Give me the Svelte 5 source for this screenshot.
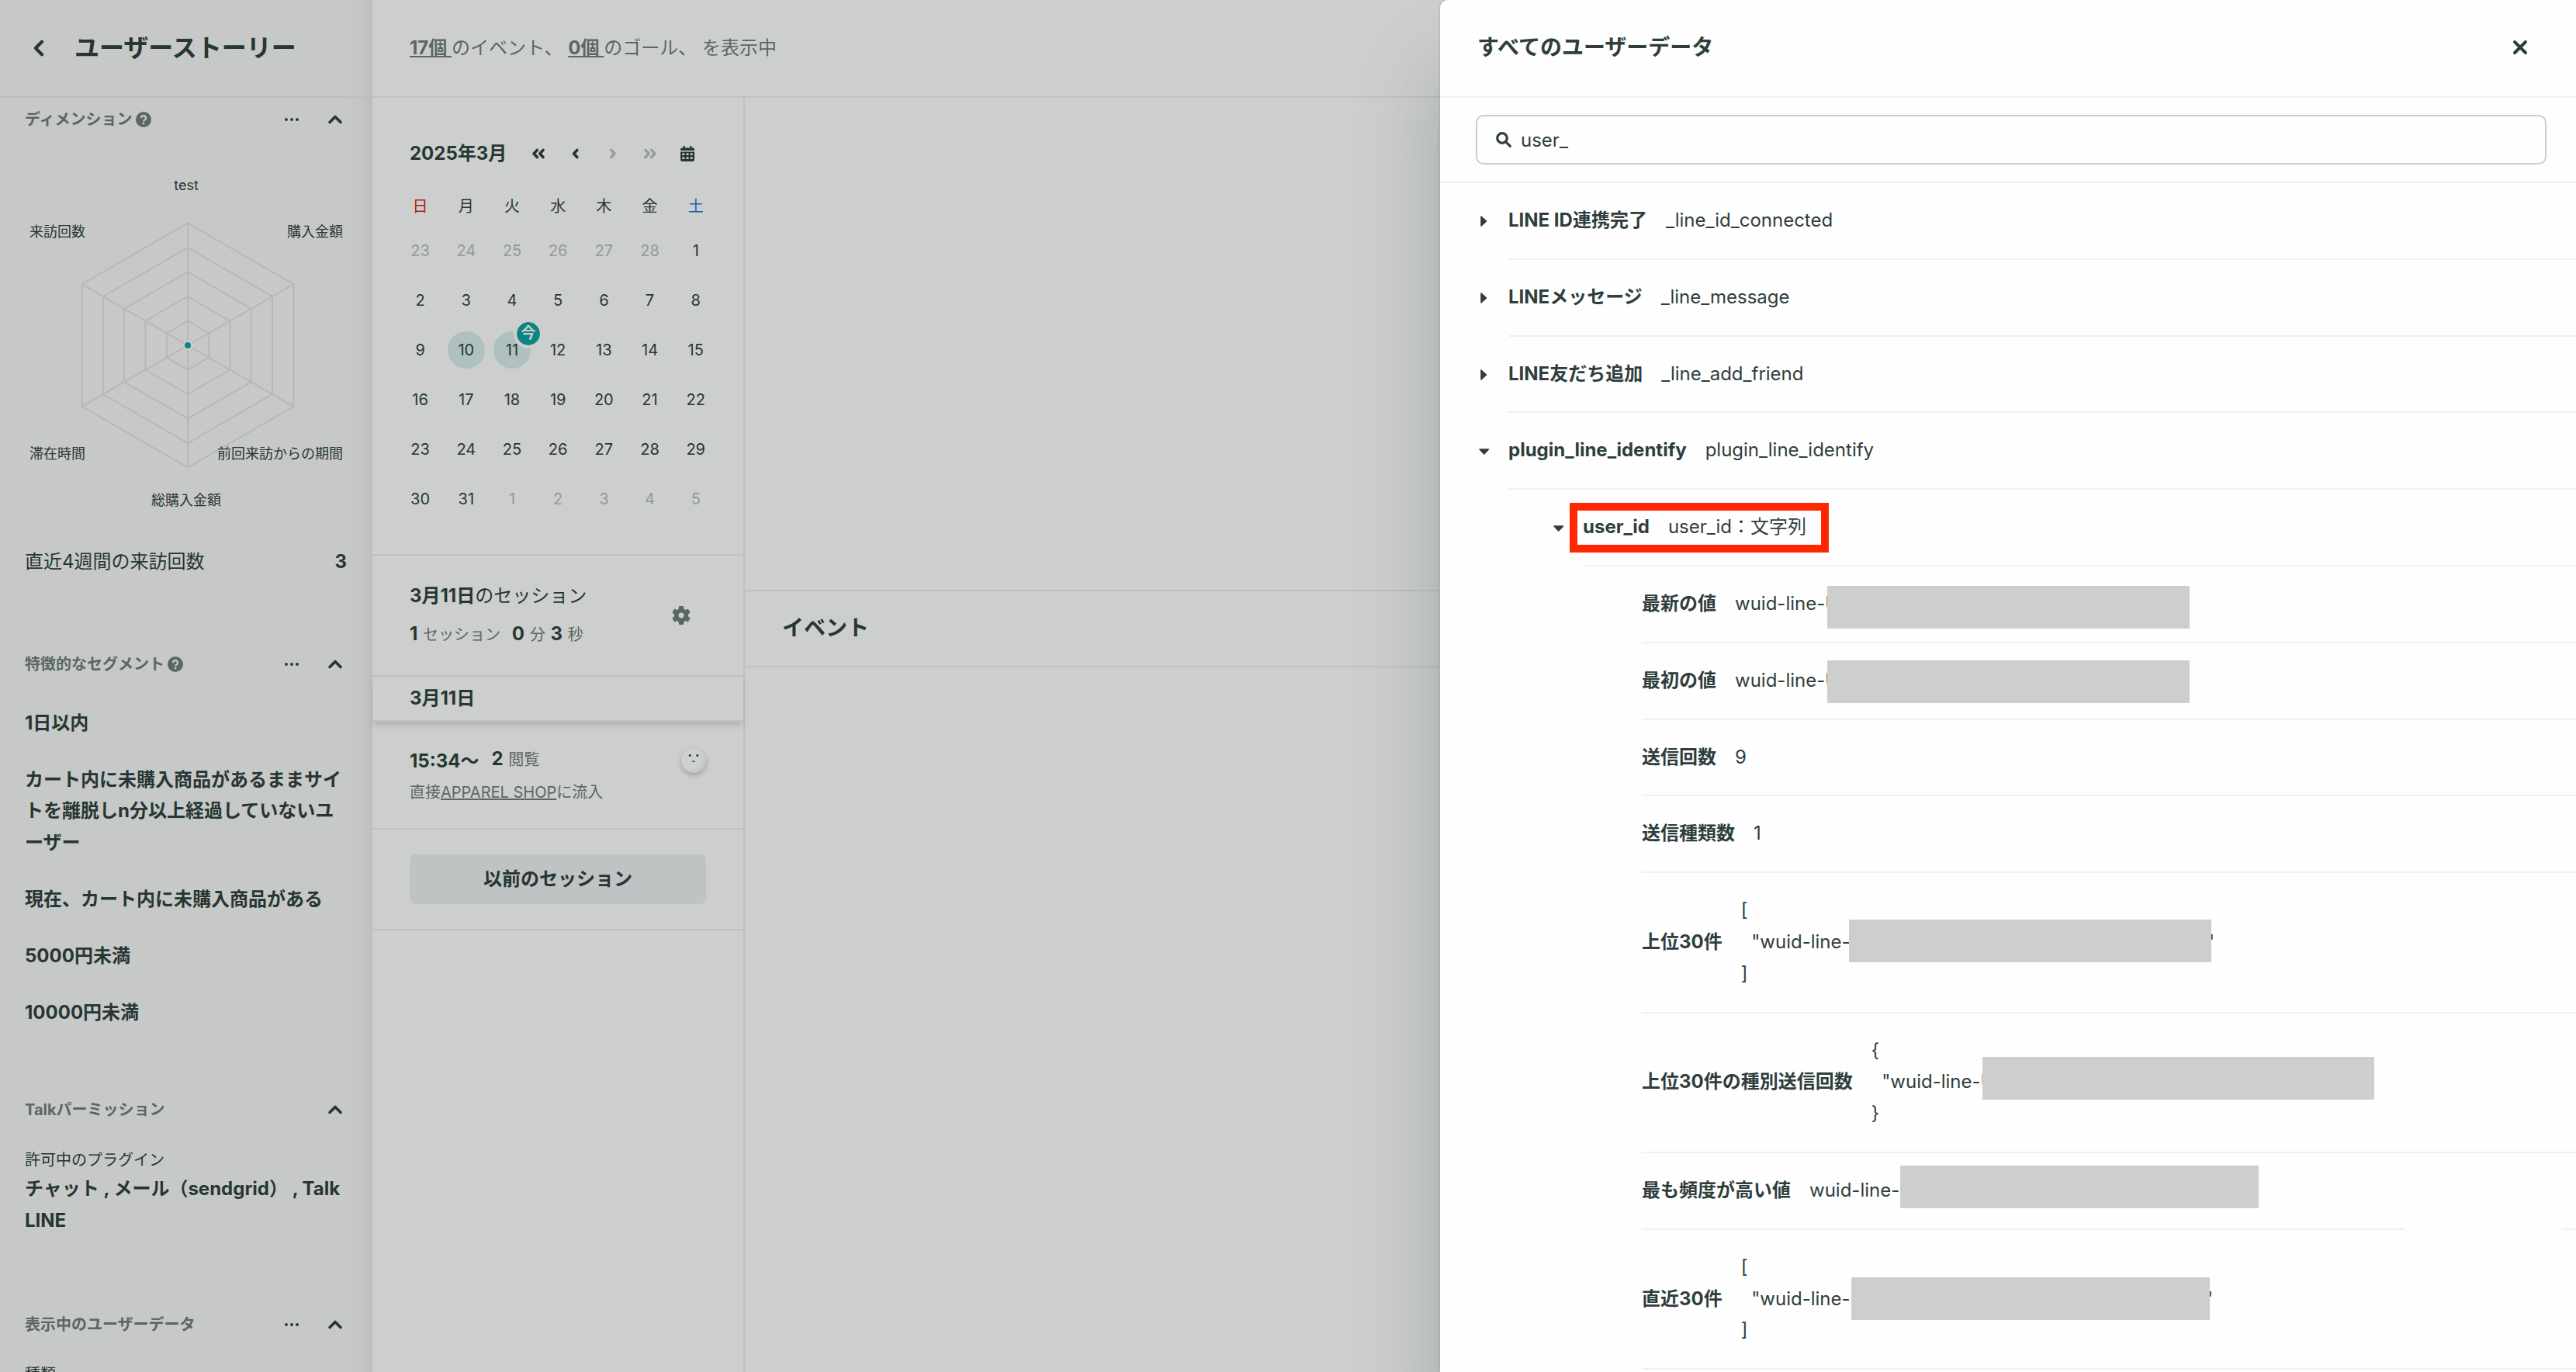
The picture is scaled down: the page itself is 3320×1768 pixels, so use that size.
<script lang="ts">
	type Row = {
		level: number;
		label: string;
		value: string;
		state?: 'open' | 'closed';
		block?: boolean;
		mask?: [left: number, top: number, width: number];
		quote?: boolean;
		marked?: boolean;
		cut?: boolean;
	};

	const week = ['日', '月', '火', '水', '木', '金', '土'];

	// Feb 23 to Apr 5
	const days = Array.from({ length: 42 }, (_, i) => {
		if (i < 6) return { n: 23 + i, out: true };
		if (i < 37) return { n: i - 5, out: false };
		return { n: i - 36, out: true };
	});

	const segments = [
		'1日以内',
		'カート内に未購入商品があるままサイトを離脱しn分以上経過していないユーザー',
		'現在、カート内に未購入商品がある',
		'5000円未満',
		'10000円未満'
	];

	const axes = [
		{ text: 'test', x: 240, y: 65, anchor: 'middle' },
		{ text: '購入金額', x: 442, y: 125, anchor: 'end' },
		{ text: '前回来訪からの期間', x: 442, y: 411, anchor: 'end' },
		{ text: '総購入金額', x: 240, y: 471, anchor: 'middle' },
		{ text: '滞在時間', x: 38, y: 411, anchor: 'start' },
		{ text: '来訪回数', x: 38, y: 125, anchor: 'start' }
	] as const;

	const rows: Row[] = [
		{ level: 1, label: 'LINE ID連携完了', value: '_line_id_connected', state: 'closed' },
		{ level: 1, label: 'LINEメッセージ', value: '_line_message', state: 'closed' },
		{ level: 1, label: 'LINE友だち追加', value: '_line_add_friend', state: 'closed' },
		{ level: 1, label: 'plugin_line_identify', value: 'plugin_line_identify', state: 'open' },
		{ level: 2, label: 'user_id', value: 'user_id：文字列', state: 'open', marked: true },
		{ level: 3, label: '最新の値', value: 'wuid-line-U', mask: [239, 25, 467] },
		{ level: 3, label: '最初の値', value: 'wuid-line-U', mask: [239, 22, 467] },
		{ level: 3, label: '送信回数', value: '9' },
		{ level: 3, label: '送信種類数', value: '1' },
		{ level: 3, label: '上位30件', value: '[\n  "wuid-line-\n]', block: true, mask: [267, 60, 467], quote: true },
		{ level: 3, label: '上位30件の種別送信回数', value: '{\n  "wuid-line-U\n}', block: true, mask: [439, 56, 505] },
		{ level: 3, label: '最も頻度が高い値', value: 'wuid-line-', mask: [333, 16, 462], cut: true },
		{ level: 3, label: '直近30件', value: '[\n  "wuid-line-\n]', block: true, mask: [270, 61, 462], quote: true }
	];

	function hexagon(r: number) {
		return [0, 1, 2, 3, 4, 5]
			.map((i) => {
				const a = (Math.PI / 3) * i;
				return `${242 + r * Math.sin(a)},${265 - r * Math.cos(a)}`;
			})
			.join(' ');
	}
</script>

{#snippet chevron(cls: string, d: string)}
	<svg class="icon {cls}" viewBox="0 0 24 24"><path {d} /></svg>
{/snippet}

{#snippet section(title: string, help: boolean, more: boolean)}
	<div class="section-head">
		<span class="section-title">{title}</span>
		{#if help}
			<svg class="help" viewBox="0 0 20 20">
				<circle cx="10" cy="10" r="10" />
				<path d="M7 8a3 3 0 1 1 4.6 2.5c-1 .6-1.6 1-1.6 1.8" />
				<circle class="dot" cx="10" cy="15" r="1.4" />
			</svg>
		{/if}
		<span class="grow"></span>
		{#if more}
			<svg class="more" viewBox="0 0 18 4">
				<circle cx="2" cy="2" r="1.9" /><circle cx="9" cy="2" r="1.9" /><circle cx="16" cy="2" r="1.9" />
			</svg>
		{/if}
		{@render chevron('up', 'M5 15.5 12 8.5l7 7')}
	</div>
{/snippet}

<div class="app">
	<aside class="sidebar">
		<header class="side-top">
			{@render chevron('back', 'M15.5 5 8.5 12l7 7')}
			<h1>ユーザーストーリー</h1>
		</header>

		<section class="dimension">
			{@render section('ディメンション', true, true)}
			<svg class="radar" viewBox="0 0 480 500">
				{#each [1, 2, 3, 4, 5] as ring}
					<polygon points={hexagon(ring * 31.5)} />
				{/each}
				{#each [0, 1, 2, 3, 4, 5] as i}
					<line
						x1="242"
						y1="265"
						x2={242 + 157.5 * Math.sin((Math.PI / 3) * i)}
						y2={265 - 157.5 * Math.cos((Math.PI / 3) * i)}
					/>
				{/each}
				<circle cx="242" cy="265" r="5" />
				{#each axes as a}
					<text x={a.x} y={a.y} text-anchor={a.anchor}>{a.text}</text>
				{/each}
			</svg>
			<div class="visits"><span>直近4週間の来訪回数</span><b>3</b></div>
		</section>

		<section class="segments">
			{@render section('特徴的なセグメント', true, true)}
			<ul>
				{#each segments as s}
					<li>{s}</li>
				{/each}
			</ul>
		</section>

		<section class="talk">
			{@render section('Talkパーミッション', false, false)}
			<p class="small">許可中のプラグイン</p>
			<p class="plugins">チャット , メール（sendgrid） , Talk LINE</p>
		</section>

		<section class="shown">
			{@render section('表示中のユーザーデータ', false, true)}
			<p class="small">種類</p>
		</section>
	</aside>

	<main>
		<header class="summary">
			<p><u>{'17個 '}</u>のイベント、 <u>{'0個 '}</u>のゴール、 を表示中</p>
		</header>

		<div class="columns">
			<div class="sessions">
				<section class="calendar">
					<div class="cal-nav">
						<b>2025年3月</b>
						<div class="cal-icons">
							{@render chevron('nav', 'M10.3 7.4 6 12l4.3 4.6M18 7.4 13.7 12l4.3 4.6')}
							{@render chevron('nav', 'M13.8 7.4 9.5 12l4.3 4.6')}
							{@render chevron('nav off', 'M9.8 7.4 14.1 12l-4.3 4.6')}
							{@render chevron('nav off', 'M6 7.4 10.3 12 6 16.6M13.7 7.4 18 12l-4.3 4.6')}
							<svg class="cal-icon" viewBox="0 0 18 20">
								<path
									fill-rule="evenodd"
									d="M3.5 1a1.2 1.2 0 0 1 2.4 0v1.5h6.2V1a1.2 1.2 0 0 1 2.4 0v1.5H16a2 2 0 0 1 2 2V6H0V4.5a2 2 0 0 1 2-2h1.5zM0 7.5h18V18a2 2 0 0 1-2 2H2a2 2 0 0 1-2-2zM2.3 9.5V12h3V9.5zm5.2 0V12h3V9.5zm5.2 0V12h3V9.5zM2.3 14.5V17h3v-2.5zm5.2 0V17h3v-2.5zm5.2 0V17h3v-2.5z"
								/>
							</svg>
						</div>
					</div>
					<div class="grid">
						{#each week as w, i}
							<span class="wd" class:sun={i === 0} class:sat={i === 6}>{w}</span>
						{/each}
						{#each days as d}
							<span class="day" class:out={d.out} class:active={!d.out && (d.n === 10 || d.n === 11)}>
								{d.n}
								{#if !d.out && d.n === 11}<i class="now">今</i>{/if}
							</span>
						{/each}
					</div>
				</section>

				<section class="day-total">
					<div>
						<p class="when"><b>3月11日</b>のセッション</p>
						<p class="stats"><b>1</b> <small>セッション</small> <b class="time">0</b> <small>分</small> <b>3</b> <small>秒</small></p>
					</div>
					<svg class="gear" viewBox="0 0 24 24">
						<circle cx="12" cy="12" r="6.2" />
						{#each [0, 60, 120, 180, 240, 300] as deg}
							<path d="M9.8.8h4.4l.8 4H9z" transform="rotate({deg} 12 12)" />
						{/each}
					</svg>
				</section>

				<div class="date-bar">3月11日</div>

				<section class="session">
					<div>
						<p class="start"><b>15:34〜</b><span><b>2</b> <small>閲覧</small></span></p>
						<p class="source">直接<u>APPAREL SHOP</u>に流入</p>
					</div>
					<div class="face">
						<svg viewBox="0 0 32 32">
							<circle cx="11.2" cy="9.5" r="1.5" /><circle cx="20.8" cy="9.5" r="1.5" />
							<path d="M14 17.2h4" />
						</svg>
					</div>
				</section>

				<div class="older"><button>以前のセッション</button></div>
			</div>

			<div class="events">
				<div class="map"></div>
				<h2>イベント</h2>
			</div>
		</div>
	</main>

	<div class="drawer">
		<header>
			<h2>すべてのユーザーデータ</h2>
			{@render chevron('close', 'M5 5l14 14M19 5 5 19')}
		</header>
		<div class="search">
			<div class="field">
				<svg viewBox="0 0 20 20"><circle cx="8" cy="8" r="6.3" /><path d="M12.8 12.8 18.3 18.3" /></svg>
				<span>user_</span>
			</div>
		</div>
		<div class="rows">
			{#each rows as row}
				<div class="row l{row.level}" class:cut={row.cut}>
					{#if row.state}
						<svg class="caret" viewBox="0 0 16 16">
							{#if row.state === 'open'}
								<path d="M3 6h11.5l-5.750 6z" />
							{:else}
								<path d="M5 2v12l6.5-6z" />
							{/if}
						</svg>
					{/if}
					<b>{row.label}</b>
					<span class="value" class:block={row.block}>{row.value}</span>
					{#if row.marked}<i class="mark"></i>{/if}
					{#if row.mask}
						{#if row.quote}
							<span class="quote" style="left: {row.mask[0] + row.mask[2] - 7}px">"</span>
						{/if}
						<i class="mask" style="left: {row.mask[0]}px; top: {row.mask[1]}px; width: {row.mask[2]}px"></i>
					{/if}
				</div>
			{/each}
		</div>
	</div>
</div>

<style>
	:global(body) {
		overflow: hidden;
	}

	.app {
		position: relative;
		display: flex;
		width: 3320px;
		height: 1768px;
		overflow: hidden;
		background: #cdcfce;
		color: #263632;
		font-family: Inter, 'Noto Sans CJK JP', sans-serif;
		font-size: 24px;
		line-height: 1.7;
	}

	h1,
	h2,
	p,
	ul {
		margin: 0;
		padding: 0;
		list-style: none;
	}

	i {
		font-style: normal;
	}

	b {
		font-weight: 700;
	}

	small {
		font-size: 20px;
		color: #5b6764;
	}

	.icon {
		fill: none;
		stroke: currentColor;
		stroke-width: 3.6;
		stroke-linecap: round;
		stroke-linejoin: round;
		flex: none;
	}

	.grow {
		flex: 1;
	}

	/* sidebar */
	.sidebar {
		width: 480px;
		flex: none;
		background: linear-gradient(to left, #bdbfbe, #c3c5c4 14px, #c7c9c8 34px);
	}

	.side-top {
		display: flex;
		align-items: center;
		height: 124px;
		border-bottom: 2px solid #bdbfbe;
	}

	.side-top h1 {
		font-size: 32px;
		font-weight: 700;
		line-height: 1;
		margin-bottom: 1px;
	}

	.back {
		width: 28px;
		height: 28px;
		margin: 0 32px 0 36px;
	}

	.section-head {
		display: flex;
		align-items: center;
		height: 34px;
		padding: 0 38px 0 32px;
	}

	.section-title {
		font-size: 20px;
		font-weight: 700;
		color: #5b6764;
	}

	.help {
		width: 20px;
		height: 20px;
		margin-left: 4px;
		fill: #5b6764;
	}

	.help path {
		fill: none;
		stroke: #c7c9c8;
		stroke-width: 2.4;
	}

	.help .dot {
		fill: #c7c9c8;
	}

	.more {
		width: 18px;
		height: 4px;
		margin-right: 35px;
		fill: #263632;
	}

	.up {
		width: 24px;
		height: 24px;
		margin-right: -2px;
	}

	.dimension {
		padding-top: 11px;
	}

	.radar {
		display: block;
		width: 480px;
		height: 500px;
		margin-top: 9px;
		font-size: 18px;
	}

	.radar polygon,
	.radar line {
		fill: none;
		stroke: #b5b7b6;
		stroke-width: 1.8;
	}

	.radar circle {
		fill: #0d8583;
		stroke: #cdcfce;
		stroke-width: 2;
	}

	.radar text {
		fill: #263632;
	}

	.visits {
		display: flex;
		justify-content: space-between;
		padding: 24px 33px 0 32px;
	}

	.segments {
		padding-top: 94px;
	}

	.segments ul {
		display: flex;
		flex-direction: column;
		gap: 32px;
		padding: 39px 32px 0;
		font-weight: 700;
	}

	.talk {
		padding-top: 88px;
	}

	.small {
		font-size: 20px;
		padding: 0 32px;
	}

	.talk .small {
		padding-top: 31px;
	}

	.plugins {
		padding: 0 30px 0 32px;
		font-weight: 700;
	}

	.shown {
		padding-top: 96px;
	}

	.shown .small {
		padding-top: 30px;
	}

	/* main */
	main {
		flex: 1;
		display: flex;
		flex-direction: column;
	}

	.summary {
		display: flex;
		align-items: center;
		height: 124px;
		padding-left: 48px;
		border-bottom: 2px solid #c0c2c1;
		color: #5b6764;
	}

	.summary p {
		white-space: pre;
	}

	.summary u {
		font-weight: 700;
	}

	.columns {
		flex: 1;
		display: flex;
	}

	.sessions {
		width: 478px;
		flex: none;
		border-right: 2px solid #c0c2c1;
	}

	.calendar {
		height: 590px;
		box-sizing: border-box;
		padding: 51px 32px 0 32px;
		border-bottom: 2px solid #c0c2c1;
	}

	.cal-nav {
		display: flex;
		align-items: center;
		height: 42px;
		padding-left: 16px;
	}

	.cal-nav b {
		width: 123px;
		white-space: nowrap;
	}

	.cal-icons {
		display: flex;
		align-items: center;
		margin-left: 31px;
	}

	.nav {
		width: 24px;
		height: 24px;
		margin-right: 24px;
	}

	.off {
		color: #9a9f9d;
	}

	.cal-icon {
		width: 18px;
		height: 20px;
		fill: #263632;
		margin-left: 3px;
	}

	.grid {
		display: grid;
		grid-template-columns: repeat(7, 59.2px);
		grid-template-rows: 50px repeat(6, 64px);
		margin-top: 22px;
		font-size: 20px;
		justify-items: center;
		align-items: center;
	}

	.sun {
		color: #b0201c;
	}

	.sat {
		color: #1b61a8;
	}

	.day {
		position: relative;
		width: 48px;
		height: 48px;
		line-height: 48px;
		text-align: center;
		border-radius: 50%;
	}

	.out {
		color: #93999a;
	}

	.active {
		background: #aec1be;
	}

	.now {
		position: absolute;
		right: -16px;
		top: -16px;
		width: 30px;
		height: 30px;
		border: 4px solid #cdcfce;
		border-radius: 50%;
		background: #0d8583;
		background-clip: padding-box;
		color: #cdcfce;
		font-size: 19px;
		font-weight: 700;
		line-height: 29px;
	}

	.day-total {
		display: flex;
		justify-content: space-between;
		align-items: center;
		height: 156px;
		box-sizing: border-box;
		padding: 0 68px 0 48px;
		border-bottom: 2px solid #c0c2c1;
	}

	.stats {
		margin-top: 8px;
	}

	.stats .time {
		margin-left: 8px;
	}

	.gear {
		width: 24px;
		height: 24px;
		fill: #5b6764;
	}

	.gear circle {
		fill: none;
		stroke: #5b6764;
		stroke-width: 5.6;
	}

	.gear path {
		stroke: #5b6764;
		stroke-width: 1.4;
		stroke-linejoin: round;
	}

	.date-bar {
		height: 56px;
		padding-left: 48px;
		border-bottom: 2px solid #c0c2c1;
		box-shadow: 0 5px 8px -1px rgba(0, 0, 0, 0.16);
		font-weight: 700;
		line-height: 56px;
	}

	.session {
		display: flex;
		justify-content: space-between;
		height: 139px;
		box-sizing: border-box;
		padding: 28px 48px 0 48px;
		border-bottom: 2px solid #c0c2c1;
	}

	.start {
		display: flex;
		gap: 16px;
		height: 46px;
	}

	.start b {
		padding-top: 3px;
	}

	.start span b {
		padding: 0;
	}

	.source {
		font-size: 20px;
		color: #5b6764;
	}

	.face {
		width: 32px;
		height: 32px;
		margin-top: 6px;
		border-radius: 50%;
		background: #cfd1d0;
		box-shadow:
			0 3px 6px rgba(0, 0, 0, 0.22),
			inset -3px -2px 5px rgba(0, 0, 0, 0.06);
	}

	.face svg {
		display: block;
		fill: #263632;
	}

	.face path {
		stroke: #5b6764;
		stroke-width: 1.6;
	}

	.older {
		padding: 32px 48px;
		border-bottom: 2px solid #c0c2c1;
	}

	.older button {
		display: block;
		width: 382px;
		height: 64px;
		border: 0;
		border-radius: 8px;
		background: #bfc3c4;
		color: inherit;
		font: inherit;
		font-weight: 700;
		line-height: 62px;
		padding: 0;
	}

	.events {
		flex: 1;
	}

	.map {
		height: 634px;
		border-bottom: 2px solid #c0c2c1;
	}

	.events h2 {
		height: 96px;
		padding-left: 48px;
		border-bottom: 2px solid #c0c2c1;
		font-size: 28px;
		line-height: 95px;
	}

	/* drawer */
	.drawer {
		position: absolute;
		right: 0;
		top: 0;
		width: 1464px;
		height: 1768px;
		border-radius: 10px 0 0 0;
		background: #fefefe;
		color: #2f3e3c;
		box-shadow:
			0 0 4px rgba(38, 54, 50, 0.2),
			0 96px 106px rgba(60, 72, 76, 0.3);
	}

	.drawer header {
		display: flex;
		align-items: center;
		justify-content: space-between;
		height: 124px;
		padding: 0 60px 0 48px;
		border-bottom: 2px solid #f0f0f0;
	}

	.drawer h2 {
		font-size: 28px;
		line-height: 1;
		margin-bottom: 2px;
	}

	.close {
		width: 24px;
		height: 24px;
		margin-bottom: 2px;
		stroke-width: 4;
	}

	.search {
		padding: 22px 38px 22px 46px;
		border-bottom: 2px solid #f0f0f0;
	}

	.field {
		display: flex;
		align-items: center;
		gap: 12px;
		height: 60px;
		padding-left: 24px;
		border: 2px solid #ccc;
		border-radius: 10px;
	}

	.field span {
		padding-top: 2px;
	}

	.field svg {
		width: 20px;
		height: 20px;
		fill: none;
		stroke: #2f3e3c;
		stroke-width: 3.2;
		stroke-linecap: round;
	}

	.row {
		position: relative;
		display: flex;
		align-items: center;
		gap: 24px;
		padding: 28px 0;
		border-bottom: 2px solid #f0f0f0;
		white-space: nowrap;
	}

	.l1 {
		margin-left: 88px;
	}

	.l2 {
		margin-left: 184px;
	}

	.l3 {
		margin-left: 260px;
	}

	.caret {
		position: absolute;
		left: -40px;
		top: 41px;
		width: 16px;
		height: 16px;
		fill: #2f3e3c;
		stroke: #2f3e3c;
		stroke-width: 1.6;
		stroke-linejoin: round;
	}

	.block {
		white-space: pre;
	}

	.mark {
		position: absolute;
		left: -17px;
		top: 17px;
		width: 314px;
		height: 44px;
		border: 10px solid #ff2600;
	}

	.mask {
		position: absolute;
		height: 55px;
		background: #cdcfce;
	}

	.quote {
		position: absolute;
		top: 69px;
	}

	/* the divider is interrupted here */
	.cut::after {
		content: '';
		position: absolute;
		right: 18px;
		bottom: -2px;
		width: 202px;
		height: 2px;
		background: #fefefe;
	}
</style>
